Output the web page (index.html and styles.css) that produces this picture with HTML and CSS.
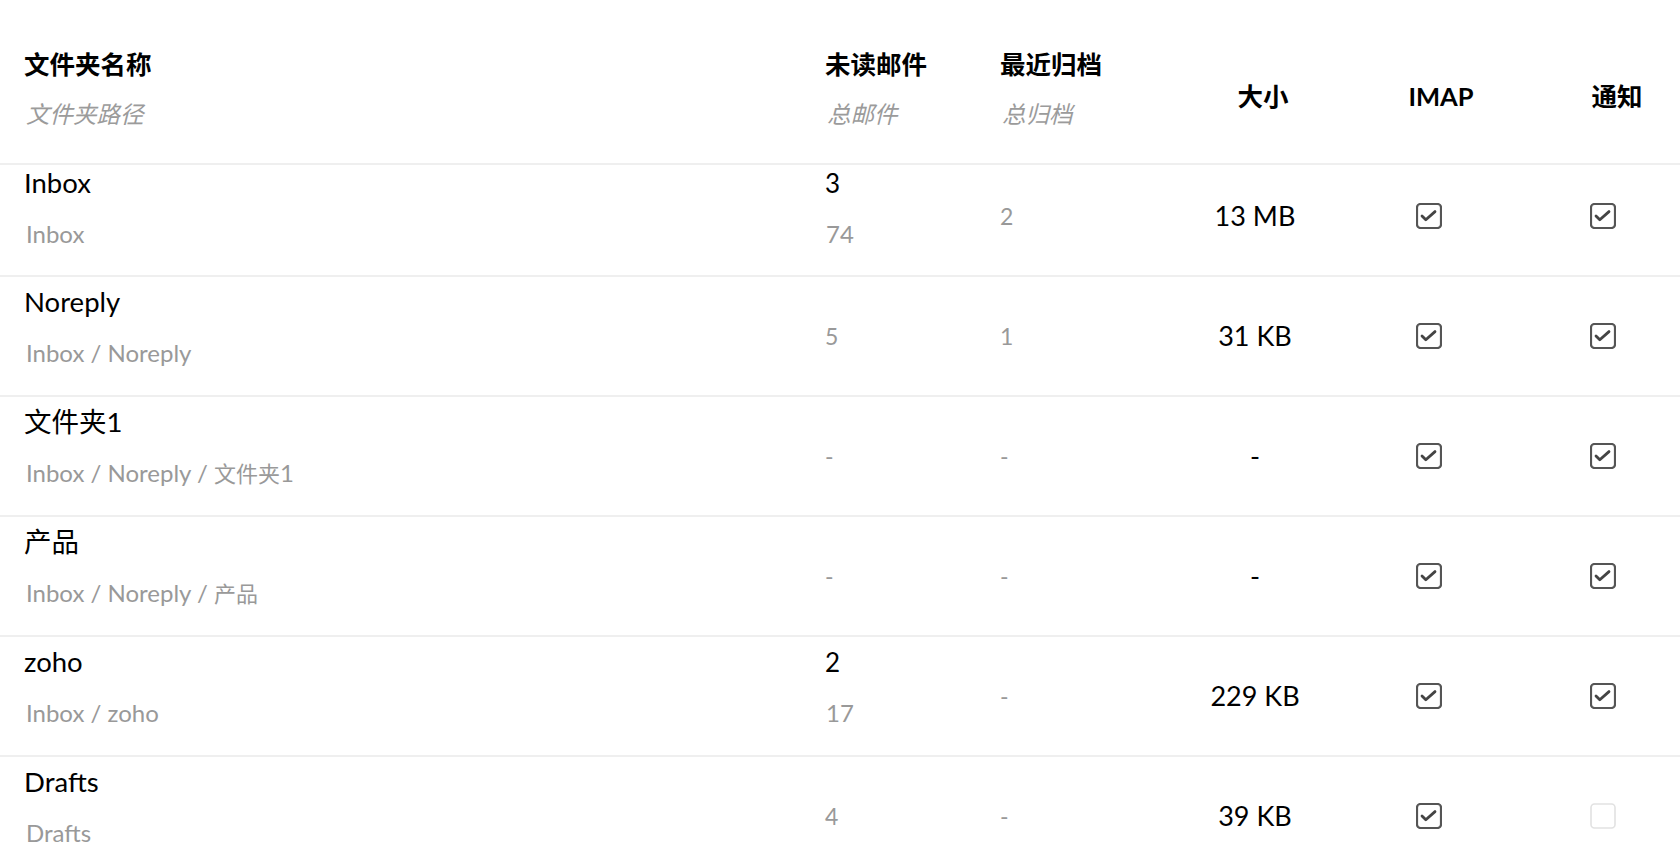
FILE: index.html
```html
<!DOCTYPE html>
<html lang="zh-CN">
<head>
<meta charset="utf-8">
<title>文件夹</title>
<link rel="stylesheet" href="styles.css">
</head>
<body>
<div class="table">
  <div class="row head">
    <div class="cell stack"><div class="h1">文件夹名称</div><div class="h2">文件夹路径</div></div>
    <div class="cell stack"><div class="h1">未读邮件</div><div class="h2">总邮件</div></div>
    <div class="cell stack"><div class="h1">最近归档</div><div class="h2">总归档</div></div>
    <div class="cell hc h-size"><div class="h1">大小</div></div>
    <div class="cell hc h-imap"><div class="h1">IMAP</div></div>
    <div class="cell hc h-notify"><div class="h1">通知</div></div>
  </div>

  <div class="row first">
    <div class="cell stack"><div class="title">Inbox</div><div class="sub">Inbox</div></div>
    <div class="cell stack"><div class="title num">3</div><div class="sub n">74</div></div>
    <div class="cell gray">2</div>
    <div class="cell size">13 MB</div>
    <div class="cell ctr"><svg class="cb" viewBox="0 0 26 26"><rect x="1" y="1" width="24" height="24" rx="3.5"/><path d="M6 13l3.8 3.8L19 8.6"/></svg></div>
    <div class="cell ctr last"><svg class="cb" viewBox="0 0 26 26"><rect x="1" y="1" width="24" height="24" rx="3.5"/><path d="M6 13l3.8 3.8L19 8.6"/></svg></div>
  </div>

  <div class="row">
    <div class="cell stack"><div class="title">Noreply</div><div class="sub">Inbox / Noreply</div></div>
    <div class="cell gray">5</div>
    <div class="cell gray">1</div>
    <div class="cell size">31 KB</div>
    <div class="cell ctr"><svg class="cb" viewBox="0 0 26 26"><rect x="1" y="1" width="24" height="24" rx="3.5"/><path d="M6 13l3.8 3.8L19 8.6"/></svg></div>
    <div class="cell ctr last"><svg class="cb" viewBox="0 0 26 26"><rect x="1" y="1" width="24" height="24" rx="3.5"/><path d="M6 13l3.8 3.8L19 8.6"/></svg></div>
  </div>

  <div class="row">
    <div class="cell stack"><div class="title">文件夹1</div><div class="sub">Inbox / Noreply / <span class="cjk">文件夹</span>1</div></div>
    <div class="cell gray">-</div>
    <div class="cell gray">-</div>
    <div class="cell size">-</div>
    <div class="cell ctr"><svg class="cb" viewBox="0 0 26 26"><rect x="1" y="1" width="24" height="24" rx="3.5"/><path d="M6 13l3.8 3.8L19 8.6"/></svg></div>
    <div class="cell ctr last"><svg class="cb" viewBox="0 0 26 26"><rect x="1" y="1" width="24" height="24" rx="3.5"/><path d="M6 13l3.8 3.8L19 8.6"/></svg></div>
  </div>

  <div class="row">
    <div class="cell stack"><div class="title">产品</div><div class="sub">Inbox / Noreply / <span class="cjk">产品</span></div></div>
    <div class="cell gray">-</div>
    <div class="cell gray">-</div>
    <div class="cell size">-</div>
    <div class="cell ctr"><svg class="cb" viewBox="0 0 26 26"><rect x="1" y="1" width="24" height="24" rx="3.5"/><path d="M6 13l3.8 3.8L19 8.6"/></svg></div>
    <div class="cell ctr last"><svg class="cb" viewBox="0 0 26 26"><rect x="1" y="1" width="24" height="24" rx="3.5"/><path d="M6 13l3.8 3.8L19 8.6"/></svg></div>
  </div>

  <div class="row">
    <div class="cell stack"><div class="title">zoho</div><div class="sub">Inbox / zoho</div></div>
    <div class="cell stack"><div class="title num">2</div><div class="sub n">17</div></div>
    <div class="cell gray">-</div>
    <div class="cell size">229 KB</div>
    <div class="cell ctr"><svg class="cb" viewBox="0 0 26 26"><rect x="1" y="1" width="24" height="24" rx="3.5"/><path d="M6 13l3.8 3.8L19 8.6"/></svg></div>
    <div class="cell ctr last"><svg class="cb" viewBox="0 0 26 26"><rect x="1" y="1" width="24" height="24" rx="3.5"/><path d="M6 13l3.8 3.8L19 8.6"/></svg></div>
  </div>

  <div class="row">
    <div class="cell stack"><div class="title">Drafts</div><div class="sub">Drafts</div></div>
    <div class="cell gray">4</div>
    <div class="cell gray">-</div>
    <div class="cell size">39 KB</div>
    <div class="cell ctr"><svg class="cb" viewBox="0 0 26 26"><rect x="1" y="1" width="24" height="24" rx="3.5"/><path d="M6 13l3.8 3.8L19 8.6"/></svg></div>
    <div class="cell ctr last"><svg class="cb off" viewBox="0 0 26 26"><rect x="1" y="1" width="24" height="24" rx="3.5"/></svg></div>
  </div>
</div>
</body>
</html>
```

FILE: styles.css
```css
html, body {
  margin: 0;
  padding: 0;
  background: #ffffff;
}

body {
  font-family: Lato, "Noto Sans CJK SC", sans-serif;
  color: #000;
  overflow: hidden;
}

.table {
  width: 1680px;
}

.row {
  display: grid;
  grid-template-columns: 801px 175px 168px 174px 174px 164px;
  padding-left: 24px;
  height: 120px;
  box-sizing: border-box;
  border-bottom: 2px solid #efefef;
  align-items: center;
}

.row.head {
  height: 165px;
  align-items: start;
}

.row.first {
  height: 112px;
  padding-bottom: 8px;
}

.cell {
  min-width: 0;
  white-space: nowrap;
}

/* header */
.h1 {
  font-size: 25.5px;
  line-height: 36px;
  font-weight: 700;
}

.h2 {
  font-size: 23.5px;
  line-height: 32px;
  font-style: italic;
  color: #9b9b9b;
  margin-top: 16px;
  margin-left: 2px;
}

.head .stack {
  padding-top: 46px;
}

.hc {
  padding-top: 78px;
  text-align: center;
}

.h-size { padding-left: 16px; }
.h-imap { padding-left: 24px; }
.h-notify { padding-left: 38px; }

/* body cells */
.stack {
  align-self: stretch;
  padding-top: 7px;
}

.row.first .stack {
  padding-top: 0;
}

.title {
  font-size: 27.5px;
  line-height: 36px;
  color: #000;
}

.title.num {
  font-size: 26px;
  padding-top: 1px;
  line-height: 35px;
}

.sub {
  font-size: 24px;
  line-height: 30px;
  color: #999;
  margin-top: 18px;
  margin-left: 2px;
}

.sub.n {
  margin-left: 1px;
}

.sub .cjk {
  font-size: 22px;
}

.gray {
  font-size: 23px;
  line-height: 30px;
  color: #999;
}

.size {
  font-size: 27px;
  line-height: 34px;
  text-align: center;
  color: #000;
}

.ctr {
  display: flex;
  justify-content: center;
}

.ctr.last {
  padding-left: 10px;
}

.cb {
  width: 26px;
  height: 26px;
  display: block;
}

.cb rect {
  fill: none;
  stroke: #555;
  stroke-width: 2.2;
}

.cb path {
  fill: none;
  stroke: #444;
  stroke-width: 2.8;
  stroke-linecap: round;
  stroke-linejoin: round;
}

.cb.off rect {
  stroke: #e2e2e2;
  stroke-width: 1.6;
}
```
